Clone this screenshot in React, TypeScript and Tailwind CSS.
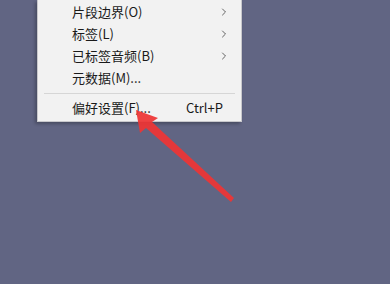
import { ChevronRight } from "lucide-react";

const items = [
  { label: "片段边界(O)", sub: true },
  { label: "标签(L)", sub: true },
  { label: "已标签音频(B)", sub: true },
  { label: "元数据(M)...", sub: false },
];

export default function App() {
  return (
    <div
      className="relative h-[284px] w-[390px] overflow-hidden bg-[#616583]"
      style={{ fontFamily: '"Microsoft YaHei", "Noto Sans CJK SC", sans-serif' }}
    >
      <div className="ml-[37px] w-[205px] border border-t-0 border-[#c8c8cc] bg-[#f2f2f2] shadow-[-2px_2px_3px_rgba(0,0,0,0.25)] text-[13px] text-[#1a1a1a]">
        <div className="pt-[1px]">
          {items.map((it) => (
            <div key={it.label} className="flex h-[22px] items-center pl-[34px] pr-[11px]">
              <span className="flex-1">{it.label}</span>
              {it.sub && <ChevronRight className="h-[12px] w-[12px] text-[#333]" strokeWidth={1.5} />}
            </div>
          ))}
        </div>
        <div className="mx-[6px] mt-[4px] mb-[3px] h-px bg-[#d6d6d6]" />
        <div className="flex h-[22px] items-center pl-[34px] pr-[18px]">
          <span className="flex-1">偏好设置(F)...</span>
          <span>Ctrl+P</span>
        </div>
        <div className="h-[2px]" />
      </div>
      <svg className="absolute left-0 top-0" width="390" height="284" viewBox="0 0 390 284">
        <path
          d="M136 110 L158 118 L152 122 L234 198 L231 202 L146 128 L140 133 Z"
          fill="#ee3535"
          opacity="0.93"
        />
      </svg>
    </div>
  );
}
